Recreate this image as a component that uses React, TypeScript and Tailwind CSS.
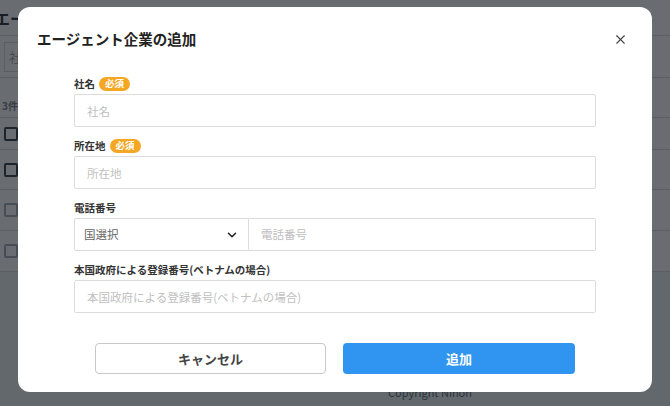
import React from 'react';
import { X, ChevronDown } from 'lucide-react';

const font = { fontFamily: '"Noto Sans CJK JP", "Noto Sans", sans-serif' };

// Page behind the dialog, only partly visible through the overlay
const BackgroundPage = () => (
    <div className="min-h-screen bg-[#eef0f3] flex flex-col">
        <div className="bg-white">
            <div className="h-[36px] border-b border-gray-300 flex items-center -ml-[6px]">
                <h1 className="text-[16px] font-bold text-gray-900">エージェント企業一覧</h1>
            </div>
            <div className="h-[42px] border-b border-gray-300 flex items-center pl-[4px]">
                <div className="h-[30px] w-[300px] border border-gray-300 flex items-center px-1 text-[13px] text-gray-400">社名</div>
            </div>
            <div className="h-[40px] border-b border-gray-300 flex items-end pb-[4px] pl-[2px] text-[10px] font-bold text-gray-500">3件中 1-3件</div>
            <div className="h-[32px] border-b border-gray-300 flex items-center pl-[4px]">
                <span className="w-[14px] h-[14px] border-2 border-gray-800 rounded-[2px]" />
            </div>
            {[0, 1, 2].map((i) => (
                <div key={i} className={`${i === 0 ? 'h-[40px]' : 'h-[41px]'} border-b border-gray-300 flex items-center pl-[4px]`}>
                    <span className={`w-[14px] h-[14px] border-2 rounded-[2px] ${i === 0 ? 'border-gray-800' : 'border-gray-400'}`} />
                </div>
            ))}
        </div>
        <div className="flex-1" />
        <p className="text-center text-[11px] leading-[16px] text-gray-600 pb-[6px] pl-[190px]">Copyright Nihon</p>
    </div>
);

const RequiredBadge = () => (
    <span className="ml-[4px] inline-flex items-center h-[14px] px-[6px] rounded-full bg-[#f5a623] text-white text-[9.5px] font-bold leading-none">必須</span>
);

const Label = ({ children }: { children: React.ReactNode }) => (
    <label className="flex items-center h-[14px] text-[10.5px] leading-[14px] font-bold text-[#333]">{children}</label>
);

const Field = ({ label, placeholder, required }: { label: string; placeholder: string; required?: boolean }) => (
    <div className="flex flex-col">
        <Label>
            {label}
            {required && <RequiredBadge />}
        </Label>
        <input
            className="mt-[3px] h-[33px] border border-[#dcdcdc] rounded-[2px] px-[12px] text-[11.5px] text-[#333] placeholder:text-[#c0c0c0] outline-none"
            placeholder={placeholder}
        />
    </div>
);

export default function App() {
    return (
        <div style={font} className="relative h-[406px] overflow-hidden">
            <BackgroundPage />

            {/* overlay */}
            <div className="absolute inset-0 bg-[#1c2127]/[0.66]" />

            {/* dialog */}
            <div className="absolute left-[18px] top-[7px] w-[634px] h-[385px] bg-white rounded-[12px] flex flex-col">
                <div className="flex items-center justify-between h-[64px] pl-[19px] pr-[24px]">
                    <h2 className="text-[14.5px] font-bold text-[#222]">エージェント企業の追加</h2>
                    <button className="text-[#444]">
                        <X size={15} strokeWidth={1.8} />
                    </button>
                </div>

                <div className="flex flex-col gap-[12px] mx-[56px] mt-[6px]">
                    <Field label="社名" placeholder="社名" required />
                    <Field label="所在地" placeholder="所在地" required />

                    <div className="flex flex-col">
                        <Label>電話番号</Label>
                        <div className="mt-[3px] flex h-[33px]">
                            <div className="w-[175px] border border-[#dcdcdc] rounded-l-[2px] flex items-center justify-between pl-[9px] pr-[9px] text-[11.5px] text-[#666]">
                                国選択
                                <ChevronDown size={14} strokeWidth={2.6} className="text-[#222]" />
                            </div>
                            <input
                                className="flex-1 min-w-0 border border-l-0 border-[#dcdcdc] rounded-r-[2px] px-[12px] text-[11.5px] placeholder:text-[#c0c0c0] outline-none"
                                placeholder="電話番号"
                            />
                        </div>
                    </div>

                    <Field label="本国政府による登録番号(ベトナムの場合)" placeholder="本国政府による登録番号(ベトナムの場合)" />
                </div>

                <div className="flex gap-[17px] mx-[77px] mt-[30px]">
                    <button className="w-[232px] h-[31px] border border-[#c8c8c8] rounded-[4px] text-[13px] font-bold text-[#444]">キャンセル</button>
                    <button className="w-[233px] h-[31px] bg-[#3095f0] rounded-[4px] text-[13px] font-bold text-white">追加</button>
                </div>
            </div>
        </div>
    );
}
